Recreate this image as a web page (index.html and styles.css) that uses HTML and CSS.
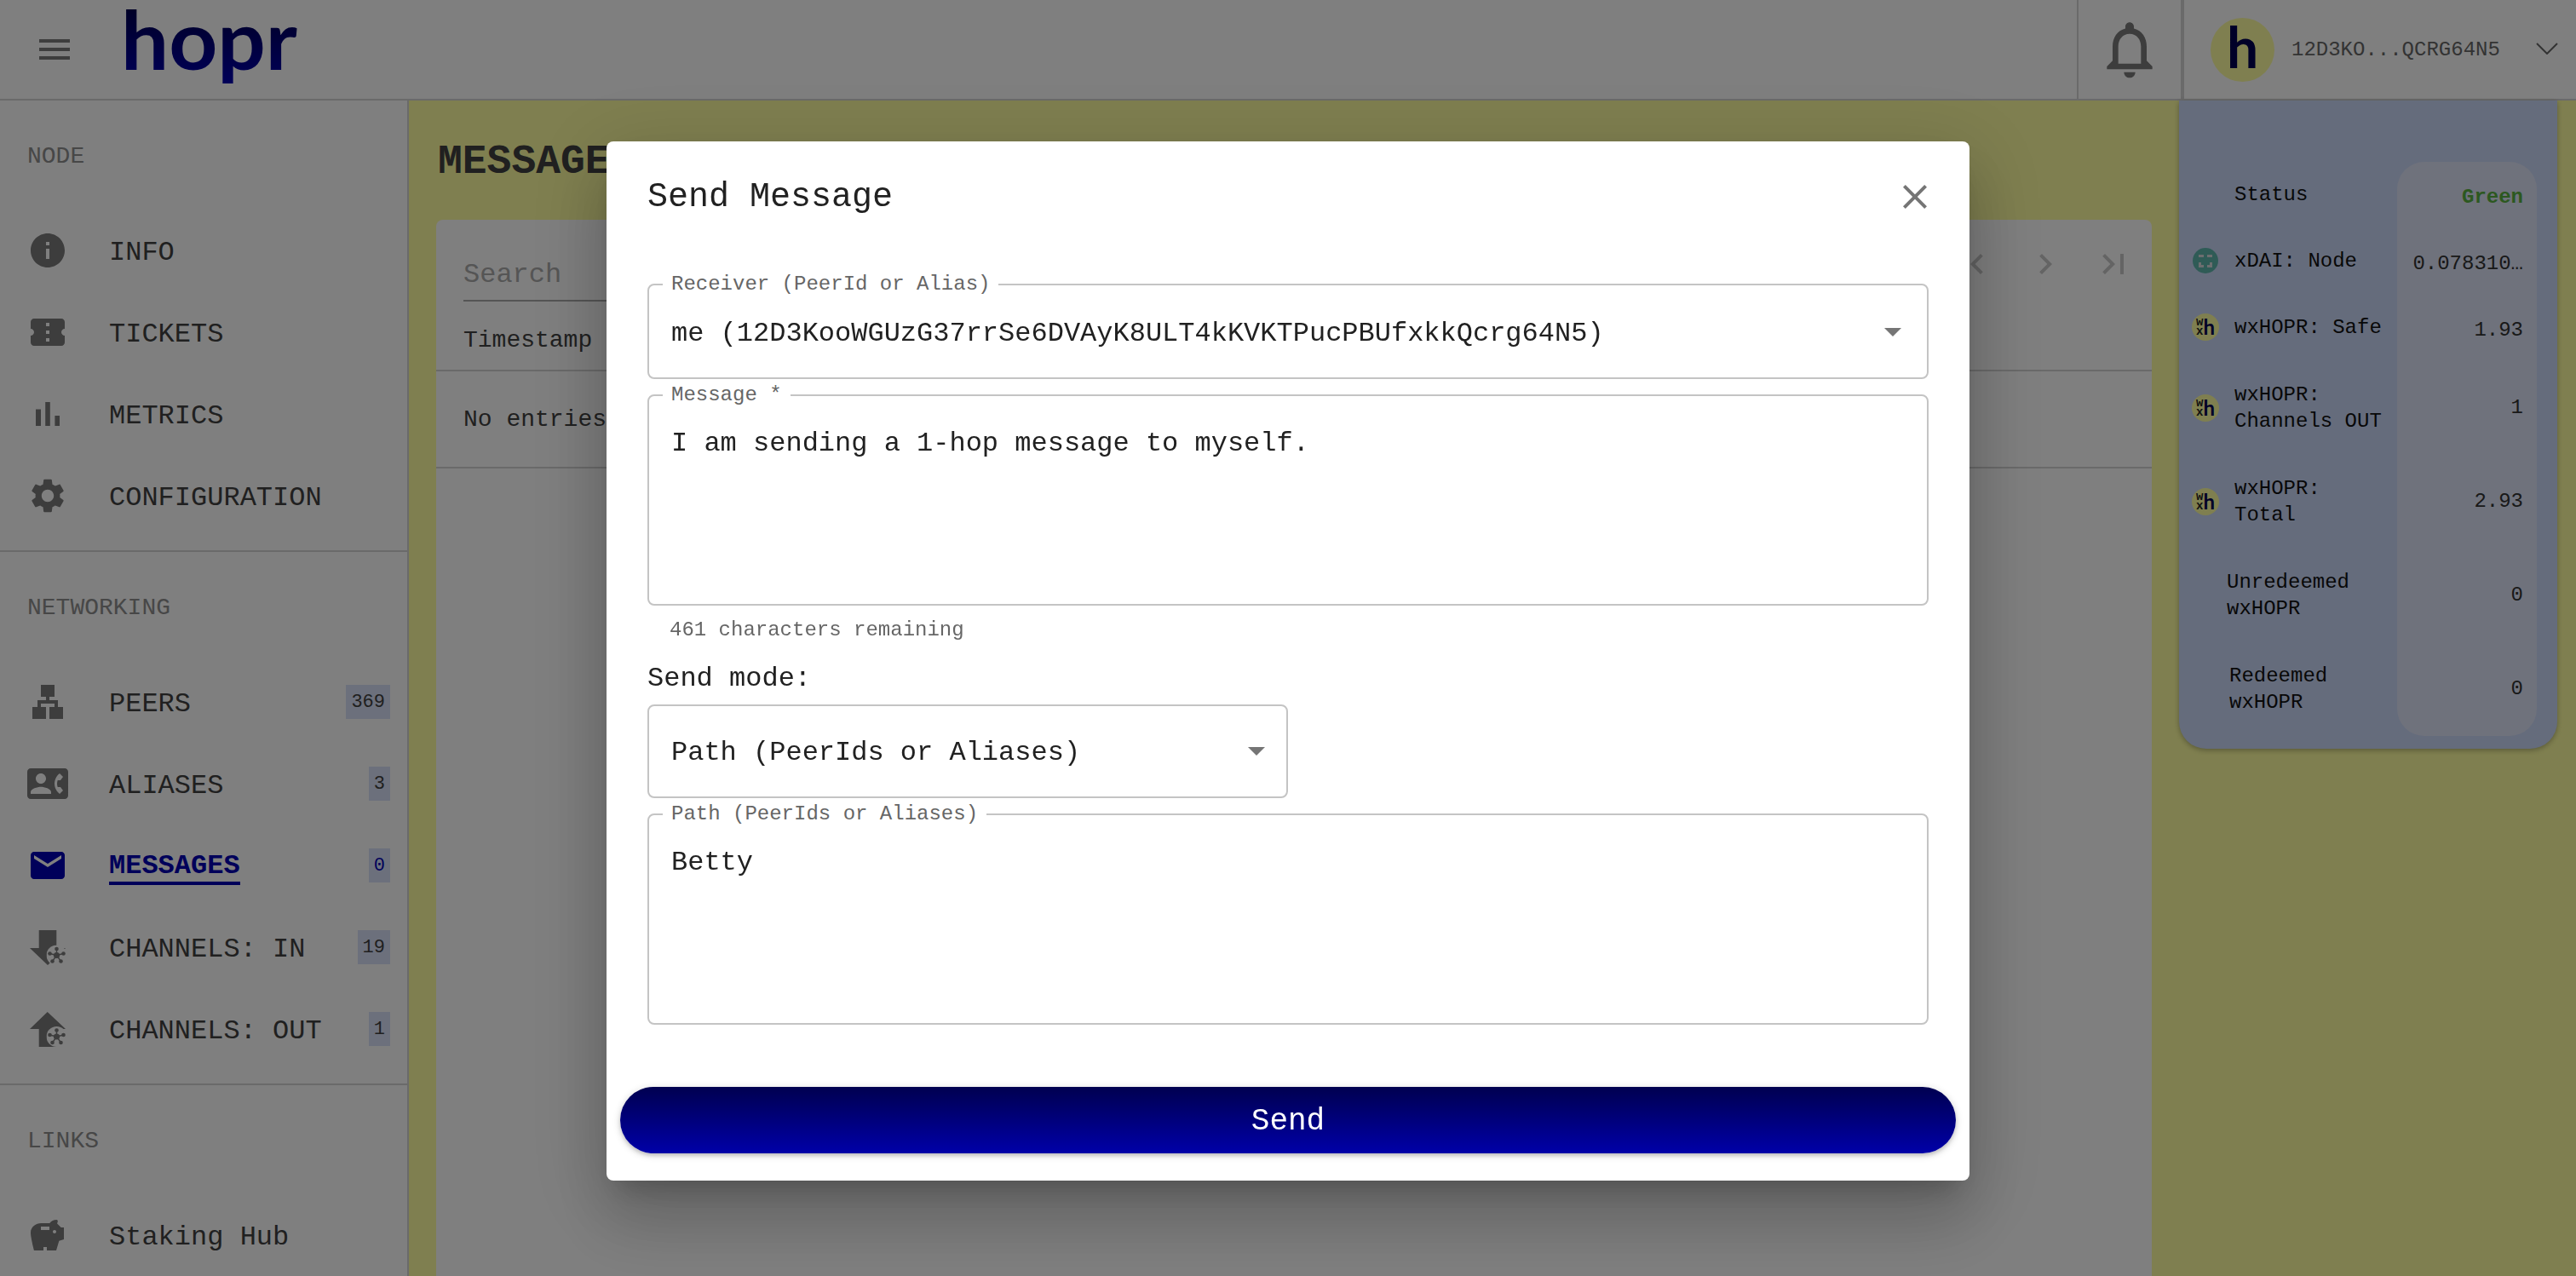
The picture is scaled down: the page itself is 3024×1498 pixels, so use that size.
FILE: index.html
```html
<!DOCTYPE html>
<html lang="en">
    <head>
        <meta charset="UTF-8" />
        <meta name="viewport" content="width=device-width, initial-scale=1.0" />
        <link rel="stylesheet" href="styles.css">
        <title>Messages</title>
    </head>
    <body>
        <svg class="defs" width="0" height="0">
            <symbol id="network" viewBox="0 0 24 24">
                <circle cx="12" cy="12" r="12" fill="#fff" />
                <path d="M12 12 L12 4.5 M12 12 L20 10 M12 12 L17 19 M12 12 L7 19 M12 12 L4 10" stroke="#7a7a7a" stroke-width="1.4" />
                <circle cx="12" cy="12" r="3.6" />
                <circle cx="12" cy="4.5" r="2.3" />
                <circle cx="20" cy="10" r="2.3" />
                <circle cx="17" cy="19" r="2.3" />
                <circle cx="7" cy="19" r="2.3" />
                <circle cx="4" cy="10" r="2.3" />
            </symbol>
        </svg>

        <header class="topbar">
            <button class="menu-btn" type="button">
                <svg class="icon" viewBox="0 0 24 24"><path d="M3 18h18v-2H3v2zm0-5h18v-2H3v2zm0-7v2h18V6H3z" /></svg>
            </button>
            <svg class="logo" viewBox="0 0 215 116">
                <defs>
                    <linearGradient id="logo-fill" gradientUnits="userSpaceOnUse" x1="0" y1="13" x2="0" y2="101">
                        <stop offset="0" stop-color="#000050" />
                        <stop offset="1" stop-color="#0000b4" />
                    </linearGradient>
                </defs>
                <text class="logo-text" x="3" y="82" textLength="207" lengthAdjust="spacingAndGlyphs" fill="url(#logo-fill)">hopr</text>
            </svg>
            <div class="topbar-space"></div>
            <div class="bell-box">
                <svg class="bell" viewBox="0 0 24 24"><path d="M12 22c1.1 0 2-.9 2-2h-4c0 1.1.9 2 2 2zm6-6v-5c0-3.07-1.63-5.64-4.5-6.32V4c0-.83-.67-1.5-1.5-1.5s-1.5.67-1.5 1.5v.68C7.64 5.36 6 7.92 6 11v5l-2 2v1h16v-1l-2-2zm-2 1H8v-6c0-2.48 1.51-4.5 4-4.5s4 2.02 4 4.5v6z" /></svg>
            </div>
            <div class="account">
                <div class="avatar">h</div>
                <span class="account-id">12D3KO...QCRG64N5</span>
                <svg class="account-arrow" viewBox="0 0 26 14"><path d="M1 1 L13 13 L25 1" /></svg>
            </div>
        </header>

        <div class="layout">
            <nav class="sidebar">
                <section class="nav-section">
                    <h2 class="nav-title">NODE</h2>
                    <a class="nav-item">
                        <svg class="icon" viewBox="0 0 24 24"><path d="M12 2C6.48 2 2 6.48 2 12s4.48 10 10 10 10-4.48 10-10S17.52 2 12 2zm1 15h-2v-6h2v6zm0-8h-2V7h2v2z" /></svg>
                        <span class="nav-text">INFO</span>
                    </a>
                    <a class="nav-item">
                        <svg class="icon" viewBox="0 0 24 24"><path d="M22 10V6c0-1.11-.9-2-2-2H4c-1.1 0-1.99.89-1.99 2v4c1.1 0 1.99.9 1.99 2s-.89 2-2 2v4c0 1.1.9 2 2 2h16c1.1 0 2-.9 2-2v-4c-1.1 0-2-.9-2-2s.9-2 2-2zm-9 7.5h-2v-2h2v2zm0-4.5h-2v-2h2v2zm0-4.5h-2v-2h2v2z" /></svg>
                        <span class="nav-text">TICKETS</span>
                    </a>
                    <a class="nav-item">
                        <svg class="icon" viewBox="0 0 24 24"><path d="M5 9.2h3V19H5zM10.6 5h2.8v14h-2.8zm5.6 8H19v6h-2.8z" /></svg>
                        <span class="nav-text">METRICS</span>
                    </a>
                    <a class="nav-item">
                        <svg class="icon" viewBox="0 0 24 24"><path d="M19.14 12.94c.04-.3.06-.61.06-.94 0-.32-.02-.64-.07-.94l2.03-1.58c.18-.14.23-.41.12-.61l-1.92-3.32c-.12-.22-.37-.29-.59-.22l-2.39.96c-.5-.38-1.03-.7-1.62-.94l-.36-2.54c-.04-.24-.24-.41-.48-.41h-3.84c-.24 0-.43.17-.47.41l-.36 2.54c-.59.24-1.13.57-1.62.94l-2.39-.96c-.22-.08-.47 0-.59.22L2.74 8.87c-.12.21-.08.47.12.61l2.03 1.58c-.05.3-.09.63-.09.94s.02.64.07.94l-2.03 1.58c-.18.14-.23.41-.12.61l1.92 3.32c.12.22.37.29.59.22l2.39-.96c.5.38 1.03.7 1.62.94l.36 2.54c.05.24.24.41.48.41h3.84c.24 0 .44-.17.47-.41l.36-2.54c.59-.24 1.13-.56 1.62-.94l2.39.96c.22.08.47 0 .59-.22l1.92-3.32c.12-.22.07-.47-.12-.61l-2.01-1.58zM12 15.6c-1.98 0-3.6-1.62-3.6-3.6s1.62-3.6 3.6-3.6 3.6 1.62 3.6 3.6-1.62 3.6-3.6 3.6z" /></svg>
                        <span class="nav-text">CONFIGURATION</span>
                    </a>
                </section>
                <section class="nav-section">
                    <h2 class="nav-title">NETWORKING</h2>
                    <a class="nav-item">
                        <svg class="icon" viewBox="0 0 24 24"><path d="M13 22h8v-7h-3v-4h-5V9h3V2H8v7h3v2H6v4H3v7h8v-7H8v-2h8v2h-3z" /></svg>
                        <span class="nav-text">PEERS</span>
                        <span class="badge">369</span>
                    </a>
                    <a class="nav-item">
                        <svg class="icon" viewBox="0 0 24 24"><path d="M22 3H2C.9 3 0 3.9 0 5v14c0 1.1.9 2 2 2h20c1.1 0 1.99-.9 1.99-2L24 5c0-1.1-.9-2-2-2zM8 6c1.66 0 3 1.34 3 3s-1.34 3-3 3-3-1.34-3-3 1.34-3 3-3zm6 12H2v-1c0-2 4-3.1 6-3.1s6 1.1 6 3.1v1zm3.85-4h1.64L21 16l-1.99 1.99c-1.31-.98-2.28-2.38-2.73-3.99-.18-.64-.28-1.31-.28-2s.1-1.36.28-2c.45-1.62 1.42-3.01 2.73-3.99L21 8l-1.51 2h-1.64c-.22.63-.35 1.3-.35 2s.13 1.37.35 2z" /></svg>
                        <span class="nav-text">ALIASES</span>
                        <span class="badge">3</span>
                    </a>
                    <a class="nav-item nav-item-active">
                        <svg class="icon" viewBox="0 0 24 24"><path d="M20 4H4c-1.1 0-1.99.9-1.99 2L2 18c0 1.1.9 2 2 2h16c1.1 0 2-.9 2-2V6c0-1.1-.9-2-2-2zm0 4l-8 5-8-5V6l8 5 8-5v2z" /></svg>
                        <span class="nav-text">MESSAGES</span>
                        <span class="badge">0</span>
                    </a>
                    <a class="nav-item">
                        <svg class="icon" viewBox="0 0 48 48">
                            <path d="M13.7 4H34.3V25H45L24 45L3 25H13.7Z" />
                            <use href="#network" x="22.5" y="21.5" width="24" height="24" />
                        </svg>
                        <span class="nav-text">CHANNELS: IN</span>
                        <span class="badge">19</span>
                    </a>
                    <a class="nav-item">
                        <svg class="icon" viewBox="0 0 48 48">
                            <path d="M23.7 4L45 24H34.3V45H13.7V24H3Z" />
                            <use href="#network" x="22.5" y="21" width="24" height="24" />
                        </svg>
                        <span class="nav-text">CHANNELS: OUT</span>
                        <span class="badge">1</span>
                    </a>
                </section>
                <section class="nav-section">
                    <h2 class="nav-title">LINKS</h2>
                    <a class="nav-item nav-item-link">
                        <svg class="icon" viewBox="0 0 24 24"><path d="M19.83,7.5l-2.27-2.27c0.07-0.42,0.18-0.81,0.32-1.15C18.05,3.69,17.74,3,17.16,3c-1.64,0-3.09,0.79-4,2l-5,0C5.12,5,2,7.08,2,10.5 C2,13.5,4,21,4,21l5.5,0l0-2l2,0l0,2l5.5,0l1.68-5.59l2.82-0.94V7.5H19.83z M13,9H8V7h5V9z M16,11c-0.55,0-1-0.45-1-1s0.45-1,1-1 s1,0.45,1,1S16.55,11,16,11z" /></svg>
                        <span class="nav-text">Staking Hub</span>
                    </a>
                </section>
            </nav>

            <main class="main">
                <h1 class="page-title">MESSAGES</h1>
                <div class="card">
                    <div class="toolbar">
                        <div class="search">Search</div>
                        <div class="pager">
                            <svg class="icon" viewBox="0 0 24 24"><path d="M15.41 7.41 14 6l-6 6 6 6 1.41-1.41L10.83 12z" /></svg>
                            <svg class="icon" viewBox="0 0 24 24"><path d="M10 6 8.59 7.41 13.17 12l-4.58 4.58L10 18l6-6z" /></svg>
                            <svg class="icon" viewBox="0 0 24 24"><path d="M5.59 7.41 10.18 12l-4.59 4.59L7 18l6-6-6-6zM16 6h2v12h-2z" /></svg>
                        </div>
                    </div>
                    <div class="table-head">Timestamp</div>
                    <div class="table-row">No entries</div>
                </div>
            </main>

            <aside class="stats">
                <div class="stats-labels">
                    <div class="stat stat-short"><span class="stat-text stat-status">Status</span></div>
                    <div class="stat stat-short">
                        <svg class="token" viewBox="0 0 30 30">
                            <circle cx="15" cy="15" r="15" fill="#5fb6ad" />
                            <path d="M7 8h6v3H7zM17 8h6v3h-6zM7 17h3v3h3v3H7zM20 17h3v6h-6v-3h3z" fill="#d9dde0" />
                        </svg>
                        <span class="stat-text">xDAI: Node</span>
                    </div>
                    <div class="stat stat-short">
                        <div class="token token-wx"><span class="token-small">w<br>x</span><span class="token-h">h</span></div>
                        <span class="stat-text">wxHOPR: Safe</span>
                    </div>
                    <div class="stat">
                        <div class="token token-wx"><span class="token-small">w<br>x</span><span class="token-h">h</span></div>
                        <span class="stat-text">wxHOPR:<br>Channels OUT</span>
                    </div>
                    <div class="stat">
                        <div class="token token-wx"><span class="token-small">w<br>x</span><span class="token-h">h</span></div>
                        <span class="stat-text">wxHOPR:<br>Total</span>
                    </div>
                    <div class="stat stat-unredeemed"><span>Unredeemed<br>wxHOPR</span></div>
                    <div class="stat stat-redeemed"><span>Redeemed<br>wxHOPR</span></div>
                </div>
                <div class="stats-values">
                    <div class="value value-short value-green">Green</div>
                    <div class="value value-short">0.078310…</div>
                    <div class="value value-short">1.93</div>
                    <div class="value">1</div>
                    <div class="value">2.93</div>
                    <div class="value">0</div>
                    <div class="value">0</div>
                </div>
            </aside>
        </div>

        <div class="backdrop">
            <div class="modal">
                <div class="modal-head">
                    <h2 class="modal-title">Send Message</h2>
                    <svg class="modal-close" viewBox="0 0 24 24"><path d="M19 6.41 17.59 5 12 10.59 6.41 5 5 6.41 10.59 12 5 17.59 6.41 19 12 13.41 17.59 19 19 17.59 13.41 12z" /></svg>
                </div>
                <form class="modal-form" action="">
                    <div class="field field-select">
                        <label class="field-label">Receiver (PeerId or Alias)</label>
                        <span>me (12D3KooWGUzG37rrSe6DVAyK8ULT4kKVKTPucPBUfxkkQcrg64N5)</span>
                        <span class="caret"></span>
                    </div>
                    <div class="field field-area">
                        <label class="field-label">Message *</label>
                        <span>I am sending a 1-hop message to myself.</span>
                    </div>
                    <p class="helper">461 characters remaining</p>
                    <p class="mode-label">Send mode:</p>
                    <div class="field field-select field-mode">
                        <span>Path (PeerIds or Aliases)</span>
                        <span class="caret"></span>
                    </div>
                    <div class="field field-area">
                        <label class="field-label">Path (PeerIds or Aliases)</label>
                        <span>Betty</span>
                    </div>
                </form>
                <div class="modal-actions">
                    <button class="send-btn" type="button">Send</button>
                </div>
            </div>
        </div>
    </body>
</html>
```

FILE: styles.css
```css
* {
    margin: 0;
    padding: 0;
    box-sizing: border-box;
}

body {
    height: 100vh;
    overflow: hidden;
    background-color: #ffffa0;
    color: #414141;
    font-family: "Liberation Mono", monospace;
    font-size: 28px;
}

.defs {
    position: absolute;
}

.icon {
    display: block;
    flex: none;
    width: 48px;
    height: 48px;
    fill: #7a7a7a;
}

/* top bar */
.topbar {
    display: flex;
    align-items: center;
    height: 118px;
    background-color: #fff;
    border-bottom: 2px solid #d4d4d4;
}

.menu-btn {
    margin-left: 40px;
    border: none;
    background: none;
}

.logo {
    flex: none;
    width: 215px;
    height: 116px;
    margin-left: 51px;
}

.logo-text {
    font-family: "Lato", sans-serif;
    font-size: 95px;
    font-weight: 700;
}

.topbar-space {
    flex: 1;
}

.bell-box {
    display: flex;
    align-items: center;
    justify-content: center;
    width: 122px;
    height: 116px;
    border-left: 2px solid #d4d4d4;
}

.bell {
    width: 80px;
    height: 80px;
    fill: #7a7a7a;
}

.account {
    display: flex;
    align-items: center;
    width: 464px;
    height: 116px;
    padding-left: 31px;
    border-left: 4px solid #d4d4d4;
}

.avatar {
    display: flex;
    align-items: center;
    justify-content: center;
    width: 75px;
    height: 75px;
    border-radius: 50%;
    background-color: #ffffa0;
    color: #000050;
    font-family: "Lato", sans-serif;
    font-size: 66px;
    font-weight: 700;
    line-height: 1;
    padding-bottom: 6px;
}

.account-id {
    margin-left: 20px;
    color: #666;
    font-size: 24px;
}

.account-arrow {
    width: 26px;
    height: 14px;
    margin-left: 42px;
    margin-bottom: 2px;
    fill: none;
    stroke: #666;
    stroke-width: 2;
}

/* page columns */
.layout {
    display: flex;
    height: calc(100vh - 118px);
    padding-right: 22px;
}

.sidebar {
    flex: none;
    width: 480px;
    background-color: #fff;
    border-right: 2px solid #d4d4d4;
}

.nav-section {
    padding: 48px 0 16px;
    border-bottom: 2px solid #d4d4d4;
}

.nav-section:last-child {
    padding-bottom: 0;
    border-bottom: none;
}

.nav-title {
    margin: 0 0 44px 32px;
    color: #8e8e8e;
    font-size: 28px;
    font-weight: 400;
    line-height: 36px;
}

.nav-item {
    display: flex;
    align-items: center;
    gap: 48px;
    height: 96px;
    padding: 0 20px 0 32px;
    font-size: 32px;
}

.nav-text {
    padding-top: 4px;
}

.nav-item .badge {
    margin-left: auto;
}

.nav-item-active {
    color: #0000b4;
}

.nav-item-active .icon {
    fill: #0000b4;
}

.nav-item-active .nav-text {
    margin-top: 6px;
    padding-top: 0;
    border-bottom: 4px solid #0000b4;
    font-weight: 700;
    line-height: 36px;
}

.badge {
    height: 40px;
    padding: 1px 6px 0;
    background-color: #d8e0f8;
    font-size: 22px;
    line-height: 40px;
}

/* messages table */
.main {
    flex: 1;
    min-width: 0;
    padding: 0 32px;
}

.page-title {
    height: 140px;
    padding: 4px 0 0 2px;
    color: #414141;
    font-size: 48px;
    font-weight: 700;
    line-height: 136px;
}

.card {
    height: calc(100% - 140px);
    background-color: #fff;
    border-radius: 8px 8px 0 0;
}

.toolbar {
    display: flex;
    justify-content: space-between;
    height: 100px;
    padding: 0 21px 0 32px;
}

.search {
    width: 420px;
    height: 96px;
    padding-top: 46px;
    border-bottom: 2px solid #aaa;
    color: #aaa;
    font-size: 32px;
    line-height: 38px;
}

.pager {
    display: flex;
    gap: 32px;
    padding-top: 28px;
}

.pager .icon {
    fill: #c8c8c8;
}

.table-head {
    padding: 24px 32px 0;
    height: 78px;
    border-bottom: 2px solid #d4d4d4;
    line-height: 36px;
}

.table-row {
    height: 114px;
    padding: 2px 32px 0;
    border-bottom: 2px solid #d4d4d4;
    line-height: 110px;
}

/* balances panel */
.stats {
    display: flex;
    flex: none;
    align-self: flex-start;
    width: 444px;
    padding: 72px 24px 15px 0;
    background-color: #cad8f8;
    border-radius: 0 0 32px 32px;
    box-shadow: 0 2px 6px rgba(0, 0, 0, 0.3);
    color: #111;
    font-size: 24px;
    line-height: 31px;
}

.stats-labels {
    width: 256px;
}

.stat {
    display: flex;
    align-items: center;
    gap: 19px;
    height: 110px;
    padding-left: 16px;
}

.stat-short {
    height: 78px;
    padding-bottom: 2px;
}

.stat-status {
    margin: 0 0 0 49px;
}

.stat-unredeemed {
    padding-left: 56px;
}

.stat-redeemed {
    padding-left: 59px;
}

.stats-values {
    width: 164px;
    background-color: #dee4f8;
    border-radius: 32px;
}

.value {
    display: flex;
    align-items: center;
    justify-content: flex-end;
    height: 110px;
    padding: 0 16px 2px 0;
    color: #333;
}

.value-short {
    height: 78px;
    padding-top: 4px;
    padding-bottom: 0;
}

.value-green {
    color: #58b040;
    font-weight: 700;
}

.token {
    display: block;
    flex: none;
    width: 30px;
    height: 30px;
}

.token-wx {
    display: flex;
    align-items: center;
    justify-content: center;
    width: 32px;
    height: 32px;
    border-radius: 50%;
    background-color: #ffffa0;
    margin-left: -1px;
    margin-right: -1px;
}

.token-small {
    color: #222;
    font-size: 14px;
    font-weight: 700;
    line-height: 11px;
}

.token-h {
    color: #000050;
    font-family: "Lato", sans-serif;
    font-size: 24px;
    font-weight: 700;
    line-height: 1;
}

/* send dialog */
.backdrop {
    position: fixed;
    top: 0;
    right: 0;
    bottom: 0;
    left: 0;
    display: flex;
    justify-content: center;
    align-items: flex-start;
    padding-top: 166px;
    background-color: rgba(0, 0, 0, 0.5);
}

.modal {
    width: 1600px;
    height: 1220px;
    background-color: #fff;
    border-radius: 8px;
    box-shadow: 0 22px 30px -14px rgba(0, 0, 0, 0.2), 0 48px 76px 6px rgba(0, 0, 0, 0.14), 0 18px 92px 16px rgba(0, 0, 0, 0.12);
    color: #212121;
}

.modal-head {
    display: flex;
    justify-content: space-between;
    align-items: center;
    height: 132px;
    padding: 0 48px;
}

.modal-title {
    font-size: 40px;
    font-weight: 400;
    line-height: 52px;
}

.modal-close {
    width: 48px;
    height: 48px;
    margin-right: -8px;
    margin-bottom: 2px;
    fill: #757575;
}

.modal-form {
    height: 978px;
    padding: 35px 48px 0;
    font-size: 32px;
}

.field {
    position: relative;
    width: 100%;
    margin-bottom: 18px;
    padding: 0 26px;
    border: 2px solid #c4c4c4;
    border-radius: 8px;
    line-height: 40px;
}

.field-select {
    display: flex;
    align-items: center;
    justify-content: space-between;
    height: 112px;
    padding-top: 6px;
}

.field-area {
    height: 248px;
    padding-top: 36px;
}

.field-mode {
    width: 752px;
    height: 110px;
    padding-top: 4px;
}

.field-mode .caret {
    margin-right: -1px;
}

.field-label {
    position: absolute;
    top: -15px;
    left: 16px;
    padding: 0 10px;
    background-color: #fff;
    color: #666;
    font-size: 24px;
    line-height: 28px;
}

.caret {
    margin-right: 4px;
    margin-top: -4px;
    border-top: 10px solid #757575;
    border-left: 10px solid transparent;
    border-right: 10px solid transparent;
}

.helper {
    margin: -3px 0 0 26px;
    color: #666;
    font-size: 24px;
    line-height: 28px;
}

.mode-label {
    margin-top: 23px;
    margin-bottom: 10px;
    line-height: 40px;
}

.modal-actions {
    padding: 0 16px;
}

.send-btn {
    display: block;
    width: 100%;
    height: 78px;
    padding-top: 2px;
    border: none;
    border-radius: 39px;
    background: linear-gradient(#000050, #0000a8);
    box-shadow: 0 3px 5px -1px rgba(0, 0, 0, 0.2), 0 2px 8px 1px rgba(0, 0, 0, 0.14);
    color: #fff;
    font-family: "Liberation Mono", monospace;
    font-size: 36px;
}
```
